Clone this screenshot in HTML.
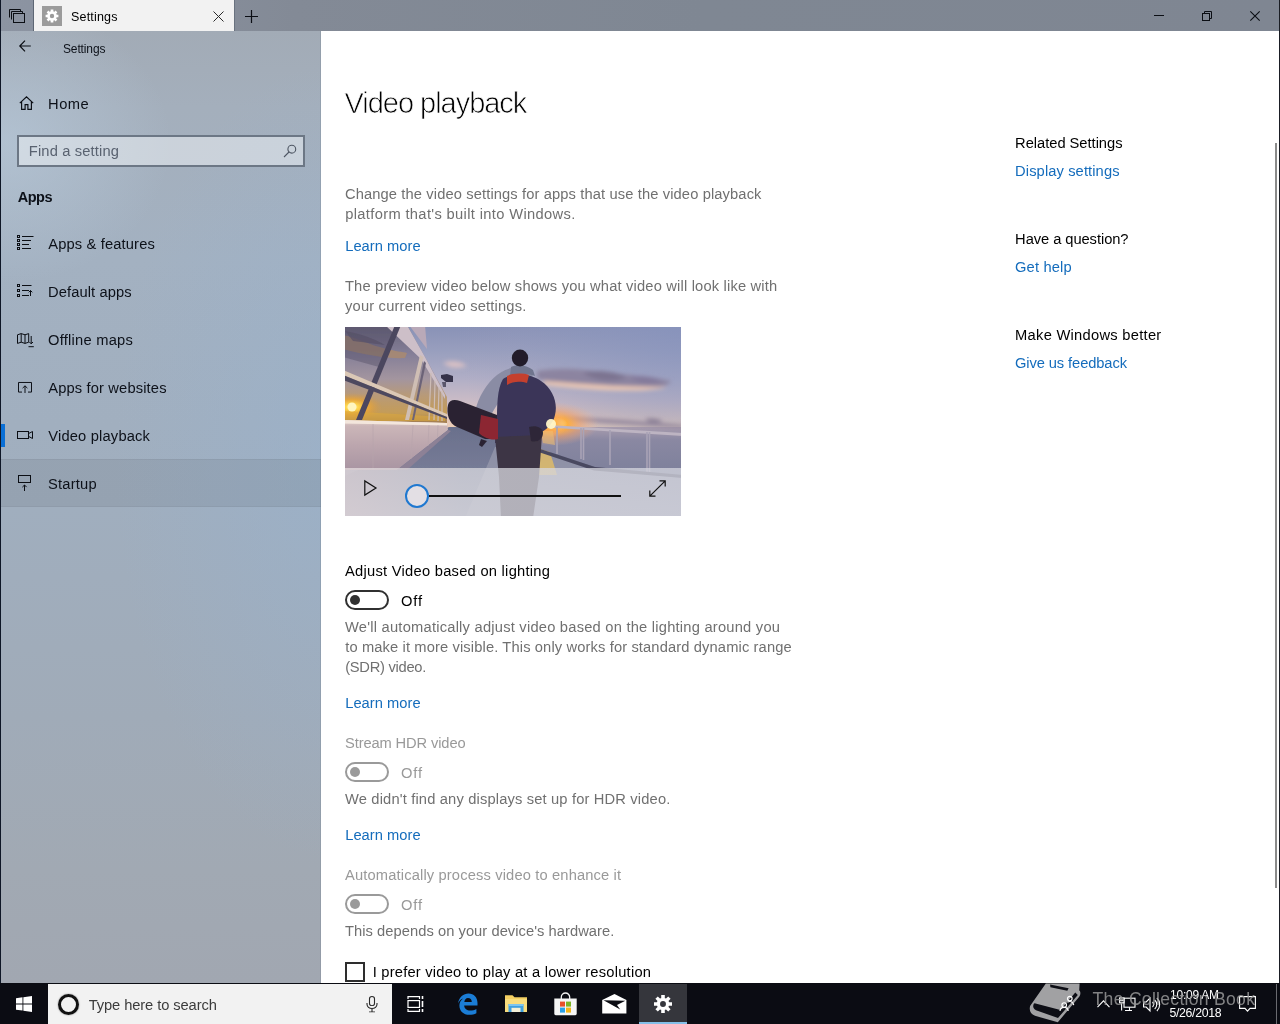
<!DOCTYPE html>
<html lang="en"><head><meta charset="utf-8"><title>Settings - Video playback</title>
<style>
html,body{margin:0;padding:0;width:1280px;height:1024px;overflow:hidden;background:#ffffff;font-family:"Liberation Sans",sans-serif;}
body{position:relative;}
.t{position:absolute;white-space:pre;line-height:1;margin:0;padding:0;}
.a{position:absolute;}
svg{position:absolute;overflow:visible;}
.tog{position:absolute;width:40px;height:16px;border:2px solid #303030;border-radius:10px;background:transparent;}
.tog i{position:absolute;left:3px;top:3px;width:10px;height:10px;border-radius:5px;background:#303030;}
.tog.d{border-color:#9a9a9a;}
.tog.d i{background:#9a9a9a;}
</style></head>
<body>

<!-- window chrome -->
<div class="a" id="titlebar" style="left:0;top:0;width:1280px;height:31px;background:linear-gradient(90deg,#8c94a2 0%,#838a96 23%,#7f8793 55%,#7f8692 100%);"></div>
<div class="a" id="sidebar" style="left:0;top:31px;width:321px;height:953px;background:
 radial-gradient(ellipse 165px 140px at 6px 112px, rgba(186,204,221,0.62), rgba(186,204,221,0) 100%),
 radial-gradient(ellipse 220px 400px at 335px 430px, rgba(152,178,206,0.55), rgba(152,178,206,0) 100%),
 linear-gradient(180deg,#a2abb6 0%,#a4afbc 8%,#a3b1c1 24%,#a0aebe 50%,#a0abb8 72%,#a1a9b3 88%,#a1a7b1 100%);"></div>
<div class="a" style="left:320px;top:31px;width:1px;height:953px;background:rgba(120,135,150,0.35);"></div>
<div class="a" style="left:1px;top:459px;width:320px;height:48px;background:rgba(0,0,0,0.065);border-top:1px solid rgba(0,0,0,0.04);border-bottom:1px solid rgba(0,0,0,0.04);box-sizing:border-box;"></div>
<div class="a" style="left:1px;top:424px;width:4px;height:23px;background:#0a6fd6;"></div>
<div class="a" id="content" style="left:321px;top:31px;width:958px;height:953px;background:#ffffff;"></div>
<div class="a" style="left:0;top:0;width:1px;height:984px;background:#0e1626;"></div>
<div class="a" style="left:1279px;top:0;width:1px;height:984px;background:#1a1d24;"></div>
<div class="a" style="left:1275px;top:143px;width:2px;height:745px;background:#8b8b8b;"></div>

<!-- tab strip -->
<div class="a" style="left:33px;top:0;width:1px;height:31px;background:#5d6674;"></div>
<div class="a" id="tab" style="left:34px;top:0;width:200px;height:31px;background:#f2f2f2;"></div>
<div class="a" style="left:234px;top:0;width:1px;height:31px;background:#69727f;"></div>
<div class="a" style="left:42px;top:6px;width:20px;height:20px;background:#9b9b9b;"></div>
<svg style="left:42px;top:6px" width="20" height="20" viewBox="0 0 20 20"><g fill="none" stroke="#fff"><circle cx="10" cy="10" r="3.5" stroke-width="2.600"/><g stroke-width="2.700"><path d="M10 3.600v2.400M10 14v2.400M3.600 10h2.400M14 10h2.400"/></g><g stroke-width="2.500"><path d="M5.500 5.500l1.700 1.700M12.800 12.800l1.700 1.700M14.500 5.500L12.800 7.200M7.200 12.800l-1.700 1.700"/></g></g></svg>
<!-- tab-set icon -->
<svg style="left:9px;top:9px" width="17" height="15" viewBox="0 0 17 15"><g fill="none" stroke="#0b0e14" stroke-width="1"><path d="M0.5 8.5V0.5h11v2"/><path d="M2.5 10.5V2.5h11v2"/><rect x="4.5" y="4.5" width="11" height="9" fill="#8a92a0"/></g></svg>
<!-- tab close -->
<svg style="left:213px;top:11px" width="11" height="11" viewBox="0 0 11 11"><path d="M0.5 0.5l10 10M10.5 0.5l-10 10" stroke="#2a2a2a" stroke-width="1" fill="none"/></svg>
<!-- new tab plus -->
<svg style="left:245px;top:10px" width="13" height="13" viewBox="0 0 13 13"><path d="M6.5 0v13M0 6.5h13" stroke="#0b0e14" stroke-width="1.2" fill="none"/></svg>
<!-- caption buttons -->
<svg style="left:1154px;top:15px" width="10" height="1" viewBox="0 0 10 1"><rect width="10" height="1" fill="#0b0e14"/></svg>
<svg style="left:1202px;top:11px" width="10" height="10" viewBox="0 0 10 10"><g fill="none" stroke="#0b0e14" stroke-width="1"><path d="M2.5 2.5V0.5h7v7h-2"/><rect x="0.5" y="2.5" width="7" height="7"/></g></svg>
<svg style="left:1250px;top:11px" width="10" height="10" viewBox="0 0 10 10"><path d="M0.3 0.3l9.4 9.4M9.7 0.3L0.3 9.7" stroke="#0b0e14" stroke-width="1.1" fill="none"/></svg>

<!-- back arrow -->
<svg style="left:19px;top:39.5px" width="13" height="12" viewBox="0 0 13 12"><path d="M11.800 6H1M6 0.700L0.800 6L6 11.300" stroke="#0b0e14" stroke-width="1.2" fill="none"/></svg>

<!-- home icon -->
<svg style="left:19px;top:96px" width="15" height="14" viewBox="0 0 15 14"><path d="M0.8 7.2L7.5 0.9L14.2 7.2M2.6 5.8V13.3H6.1V8.6H8.9V13.3H12.4V5.8" stroke="#0b0e14" stroke-width="1.15" fill="none"/></svg>

<!-- search box -->
<div class="a" style="left:17px;top:135px;width:288px;height:32px;box-sizing:border-box;border:2px solid #6c7785;background:rgba(235,238,242,0.55);"></div>
<svg style="left:283px;top:144px" width="14" height="14" viewBox="0 0 14 14"><g fill="none" stroke="#4e5663" stroke-width="1.1"><circle cx="8.8" cy="5.2" r="3.9"/><path d="M6 8L1 13"/></g></svg>

<!-- nav icons -->
<svg style="left:17px;top:235px" width="17" height="15" viewBox="0 0 17 15"><g fill="none" stroke="#0b0e14" stroke-width="1"><rect x="0.5" y="0.5" width="2" height="2"/><rect x="0.5" y="4.5" width="2" height="2"/><rect x="0.5" y="8.5" width="2" height="2"/><rect x="0.5" y="12.5" width="2" height="2"/><path d="M5 1.5h11.5M5 5.5h9M5 9.5h7M5 13.5h9"/></g></svg>
<svg style="left:17px;top:284px" width="17" height="14" viewBox="0 0 17 14"><g fill="none" stroke="#0b0e14" stroke-width="1"><rect x="0.5" y="0.5" width="2" height="2"/><rect x="0.5" y="5.5" width="2" height="2"/><rect x="0.5" y="10.5" width="2" height="2"/><path d="M5 1.5h9.5M5 6.5h7M5 11.5h7M13.5 12V6.5M11.7 8.3l1.8-1.8l1.8 1.8"/></g></svg>
<svg style="left:17px;top:333px" width="17" height="15" viewBox="0 0 17 15"><g fill="none" stroke="#0b0e14" stroke-width="1"><path d="M0.5 1.8L4.2 0.6L8 1.8L11.7 0.6V9.2L8 10.4L4.2 9.2L0.5 10.4Z"/><path d="M4.2 0.6V9.2M8 1.8V10.4"/><path d="M14.2 3V10.8M12.4 9l1.8 1.800l1.800-1.800M11.500 13.700h5.300"/></g></svg>
<svg style="left:17.5px;top:381.5px" width="14" height="11.5" viewBox="0 0 14 12" preserveAspectRatio="none"><g fill="none" stroke="#0b0e14" stroke-width="1"><path d="M4 10.5H0.5V0.5H13.5V10.5H10"/><path d="M7 11.5V4M4.6 6.4L7 4l2.4 2.4"/></g></svg>
<svg style="left:17px;top:430px" width="17" height="10" viewBox="0 0 17 10"><g fill="none" stroke="#0b0e14" stroke-width="1"><rect x="0.5" y="1.5" width="11" height="7"/><path d="M11.5 3.6L15.5 1.5V8.5L11.5 6.4"/></g></svg>
<svg style="left:18px;top:475px" width="14" height="17" viewBox="0 0 14 17"><g fill="none" stroke="#0b0e14" stroke-width="1"><rect x="0.5" y="0.5" width="12" height="7"/><path d="M6.5 16V10M4.4 12.1l2.1-2.1l2.1 2.1"/></g></svg>

<!-- video preview -->
<div class="a" id="video" style="left:345px;top:327px;width:336px;height:189px;overflow:hidden;background:#8288a2;">
<svg style="left:0;top:0" width="336" height="189" viewBox="0 0 336 189">
 <defs>
  <linearGradient id="sky" x1="0" y1="0" x2="0" y2="1"><stop offset="0" stop-color="#8891b6"/><stop offset="0.25" stop-color="#999fbe"/><stop offset="0.5" stop-color="#b0aec6"/><stop offset="0.72" stop-color="#cbbcc6"/><stop offset="0.88" stop-color="#e4c9be"/><stop offset="1" stop-color="#efd0b2"/></linearGradient>
  <radialGradient id="skyr" gradientUnits="userSpaceOnUse" cx="340" cy="-10" r="230"><stop offset="0" stop-color="#8793bd" stop-opacity="0.75"/><stop offset="0.5" stop-color="#8d97bd" stop-opacity="0.4"/><stop offset="1" stop-color="#9a9cbc" stop-opacity="0"/></radialGradient>
  <radialGradient id="sun" cx="0.5" cy="0.5" r="0.5"><stop offset="0" stop-color="#fffbe0"/><stop offset="0.14" stop-color="#ffe070"/><stop offset="0.32" stop-color="#ffae3c" stop-opacity="0.95"/><stop offset="0.6" stop-color="#f8a060" stop-opacity="0.5"/><stop offset="1" stop-color="#f0b090" stop-opacity="0"/></radialGradient>
  <radialGradient id="sun2" cx="0.5" cy="0.5" r="0.5"><stop offset="0" stop-color="#fff8c8"/><stop offset="0.2" stop-color="#ffd850"/><stop offset="0.55" stop-color="#f0a830" stop-opacity="0.75"/><stop offset="1" stop-color="#d89840" stop-opacity="0"/></radialGradient>
  <linearGradient id="deck" x1="0" y1="0" x2="0" y2="1"><stop offset="0" stop-color="#6a708c"/><stop offset="0.45" stop-color="#767b96"/><stop offset="1" stop-color="#9698ad"/></linearGradient>
  <linearGradient id="glass" x1="0" y1="0" x2="0" y2="1"><stop offset="0" stop-color="#67637a"/><stop offset="0.3" stop-color="#857f98"/><stop offset="0.55" stop-color="#a3959f"/><stop offset="0.72" stop-color="#b89a78"/><stop offset="0.9" stop-color="#c49c58"/><stop offset="1" stop-color="#a07c50"/></linearGradient>
  <linearGradient id="wall" x1="0" y1="0" x2="0" y2="1"><stop offset="0" stop-color="#e6d4cc"/><stop offset="0.12" stop-color="#cbb6b8"/><stop offset="0.5" stop-color="#bca6ae"/><stop offset="1" stop-color="#a995a2"/></linearGradient>
  <linearGradient id="sea" x1="0" y1="0" x2="0" y2="1"><stop offset="0" stop-color="#a89cae"/><stop offset="0.25" stop-color="#8a88a2"/><stop offset="1" stop-color="#7b7f9a"/></linearGradient>
  <filter id="b1" x="-5%" y="-5%" width="110%" height="110%"><feGaussianBlur stdDeviation="0.7"/></filter>
  <filter id="b3" x="-20%" y="-50%" width="140%" height="200%"><feGaussianBlur stdDeviation="2.2"/></filter>
 </defs>
 <g filter="url(#b1)">
 <rect x="-2" y="-2" width="340" height="106" fill="url(#sky)"/>
 <rect x="100" y="-2" width="238" height="106" fill="url(#skyr)"/>
 <!-- sea + far shore -->
 <rect x="178" y="100" width="160" height="52" fill="url(#sea)"/>
 <!-- clouds -->
 <g filter="url(#b3)">
  <path d="M192 44 C215 40 240 42 262 46 C285 48 305 50 326 54 C322 62 300 62 270 60 C240 58 210 56 192 52 Z" fill="#8c84a0"/>
  <path d="M198 54 C230 56 270 60 322 60 C300 66 250 64 200 58 Z" fill="#ecc8b4"/>
  <path d="M98 36 C106 33 116 34 122 39 C112 42 104 41 98 36Z" fill="#d8c0c4"/>
  <path d="M214 91 C250 90 300 95 338 98 L338 101 C300 99 250 95 214 93Z" fill="#93869c"/>
  <path d="M300 92 C306 91 314 92 318 94 C312 96 304 96 300 92Z" fill="#857a92"/><path d="M238 46 C250 42 270 44 282 50 C270 56 250 54 238 46Z" fill="#7c7390"/><path d="M284 50 C296 48 310 50 318 54 C306 58 292 56 284 50Z" fill="#82789a"/>
 </g>
 <!-- sun glow -->
 <ellipse cx="208" cy="97" rx="46" ry="22" fill="url(#sun)"/><ellipse cx="206" cy="97" rx="16" ry="13" fill="url(#sun)"/>
 <!-- deck floor -->
 <path d="M104 100 L181 100 L181 117 L250 140 L338 148 L338 191 L-2 191 L-2 150 Z" fill="url(#deck)"/>
 <path d="M150 120 L186 120 L252 143 L338 151 L338 191 L120 191 Z" fill="#a9a9ba" opacity="0.5"/>
 <path d="M192 121 L205 125 L212 148 L186 148 Z" fill="#e8c060" opacity="0.75"/><path d="M196 104 L208 104 L210 118 L198 116 Z" fill="#f0c070" opacity="0.55"/>
 <!-- right railing -->
 <path d="M203 98 L338 106 L338 109 L203 100.5 Z" fill="#bdb4c2"/>
 <g stroke="#a9a3b6" stroke-width="1.6"><path d="M212 100V127M236 101V132M238.5 101V133M265 103V138M302 105V146M304.500 105V147"/></g>
 <path d="M180 117 L250 140 L338 148 L338 151 L249 143.500 L180 120.500 Z" fill="#4a4860"/>
 <!-- left: windows -->
 <path d="M-2 -2 L62 -2 L80 30 L102 70 L102 96 L-2 94 Z" fill="url(#glass)"/>
 <path d="M-2 8 C10 10 24 18 42 22 C50 24 58 25 62 26 L60 31 C44 32 20 28 -2 22Z" fill="#a98a70" opacity="0.85"/>
 <path d="M0 4 C14 6 30 12 40 18 L8 14 Z" fill="#5c566c" opacity="0.7"/><path d="M-2 -2 L50 -2 L34 40 L-2 30 Z" fill="#4c475e" opacity="0.38"/>
 <path d="M40 -2 L62 -2 L80 30 L100 68 L100 72 L76 32 Z" fill="#cdbfc8"/>
 <path d="M64 -2 L80 -2 L82 22 Z" fill="#b9a9b8"/>
 <ellipse cx="7" cy="80" rx="30" ry="14" fill="url(#sun2)"/>
 <path d="M0 84 L100 90 L100 94 L0 94 Z" fill="#dca83c" opacity="0.6"/>
 <path d="M50 -2 L56 -2 L17 93 L11 93 Z" fill="#4c465e"/>
 <path d="M75 28 L78.500 30 L64 93 L60 93 Z" fill="#cfbeb4"/>
 <path d="M79 34 L81 36 L69 93 L67 93 Z" fill="#6c6478"/>
 <g stroke="#cdbcb6" stroke-width="1.2"><path d="M86 46L84 93M90 54L89 93M94 60L93 94M97 64L97 94"/></g>
 <path d="M-2 43 L102 87 L102 90 L-2 48 Z" fill="#dbc8b6"/>
 <path d="M-2 48 L102 90 L102 92 L-2 53 Z" fill="#4e485e"/>
 <circle cx="7" cy="80" r="4.500" fill="#fff6c0"/>
 <!-- white bulkhead -->
 <path d="M-2 93 L102 96 L103 103 L52 143 L-2 143 Z" fill="url(#wall)"/>
 <path d="M-2 93 L102 96 L102 98.500 L-2 96.500 Z" fill="#f3e6dc"/>
 <path d="M52 143 L103 103 L106 104 L62 143 Z" fill="#8d8196"/>
 <g stroke="#b7a4ac" stroke-width="0.8" opacity="0.8"><path d="M28 97V143M68 98L66 132M84 98L83 119M93 98L92.500 111"/></g>
 <!-- lamp -->
 <path d="M96 48 L102 47 L108 49 L108 55 L101 55 L96 51 Z" fill="#34334a"/><path d="M97 55 L101 55 L101 60 L98 60Z" fill="#5a566c"/>
 <!-- person: arm + shoulder (grey-blue sleeve) -->
 <path d="M130 85 C133 70 142 56 152 48 C158 43 166 40 172 41 L188 46 L186 58 L166 62 C158 68 150 80 144 92 Z" fill="#8a8ca4"/>
 <path d="M146 88 C149 78 154 70 160 64 L162 84 L152 98 Z" fill="#f0cdb4" opacity="0.0"/>
 <!-- torso / backpack -->
 <path d="M158 52 C166 46 186 46 196 54 C208 62 213 76 210 88 C208 98 200 104 194 106 L196 118 L150 116 L152 96 C152 80 152 62 158 52 Z" fill="#3a3658"/>
 <path d="M166 40 C172 37 182 38 188 43 L190 49 C182 46 172 46 165 49 Z" fill="#6f758e"/>
 <path d="M162 49 C168 46 178 46 184 48 L182 56 C176 54 168 54 162 58 Z" fill="#c4412e"/>
 <!-- legs -->
 <path d="M150 110 L197 108 L194 150 L188 191 L156 191 L154 150 Z" fill="#3d3444"/>
 <path d="M184 100 C190 98 198 100 198 106 C198 112 192 116 186 114 Z" fill="#2e2838"/>
 <!-- head -->
 <ellipse cx="175" cy="31" rx="8.200" ry="8.400" fill="#231f2c"/>
 <!-- snowboard -->
 <path d="M103 78 C104 73 109 72 115 74 L152 88 L152 112 L140 112 L112 100 C104 97 101 86 103 78 Z" fill="#2a2432"/>
 <path d="M136 88 L153 92 L153 112 C146 114 138 110 134 106 Z" fill="#8c2733"/>
 <path d="M136 112 L142 114 L137 120 L134 118Z" fill="#2a2432"/>
 <circle cx="206" cy="97" r="5" fill="#fff6c8" opacity="0.95"/>
 </g>
</svg>
<!-- controls overlay -->
<div class="a" style="left:0;top:141px;width:336px;height:48px;background:linear-gradient(90deg,rgba(228,218,220,0.78) 0%,rgba(216,216,222,0.76) 35%,rgba(212,213,222,0.76) 100%);"></div>
<svg style="left:19px;top:153px" width="13" height="16" viewBox="0 0 13 16"><path d="M0.8 0.9V15.1L12 8Z" fill="none" stroke="#111" stroke-width="1.2" stroke-linejoin="miter"/></svg>
<div class="a" style="left:84px;top:168px;width:192px;height:2px;background:#101010;"></div>
<div class="a" style="left:60px;top:157px;width:20px;height:20px;border:2px solid #1f78d0;border-radius:12px;background:#e3dfe4;"></div>
<svg style="left:304px;top:153px" width="17" height="17" viewBox="0 0 17 17"><path d="M0.8 16.2L16.2 0.8M10.5 0.8h5.7v5.7M0.8 10.5v5.7h5.7" fill="none" stroke="#111" stroke-width="1.2"/></svg>
</div>


<!-- toggles -->
<div class="tog" style="left:345px;top:590px;"><i></i></div>
<div class="tog d" style="left:345px;top:762px;"><i></i></div>
<div class="tog d" style="left:345px;top:894px;"><i></i></div>
<!-- checkbox -->
<div class="a" style="left:345px;top:962px;width:20px;height:20px;box-sizing:border-box;border:2px solid #2e2e2e;background:#fff;"></div>

<!-- taskbar -->
<div class="a" id="taskbar" style="left:0;top:983px;width:1280px;height:41px;background:#0b0c13;z-index:20;"></div>
<div class="a" style="left:48px;top:984px;width:344px;height:40px;background:#f2f2f2;z-index:21;"></div>
<svg style="left:16px;top:996px;z-index:22" width="16" height="16" viewBox="0 0 17 17"><path d="M0 2.4L6.9 1.4V8H0ZM7.8 1.3L17 0V8H7.8ZM0 8.9H6.9V15.5L0 14.5ZM7.8 8.9H17V17L7.8 15.7Z" fill="#ffffff"/></svg>
<div class="a" style="left:57.5px;top:993.5px;width:15px;height:15px;border:3px solid #111;border-radius:12px;z-index:22;box-shadow:0 0 1.5px rgba(0,0,0,0.6);"></div>
<svg style="left:365.5px;top:996px;z-index:22" width="12" height="16.5" viewBox="0 0 12 19" preserveAspectRatio="none"><g fill="none" stroke="#2a2a2a" stroke-width="1.1"><rect x="3.5" y="0.6" width="5" height="10.5" rx="2.5"/><path d="M1 8v1.5a5 5 0 0 0 10 0V8M6 14.5V18M3 18.3h6"/></g></svg>
<!-- task view -->
<svg style="left:407px;top:996px;z-index:22" width="18" height="16" viewBox="0 0 18 16"><g fill="none" stroke="#fff" stroke-width="1.2"><path d="M1 3V0.6h11.5V3M1 13v2.4h11.5V13"/><rect x="1" y="4.6" width="11.5" height="6.8"/><path d="M15.5 0v3M15.5 5v6M15.5 13v3" stroke-width="1.6"/></g></svg>
<!-- edge -->
<svg style="left:456.5px;top:993px;z-index:22" width="21" height="22" viewBox="0 0 21 22"><path d="M1 10.5C2 4 6.5 0.5 11.5 0.5C17 0.5 20.5 4.5 20.5 10V12.5H7.2C7.4 15.8 10 17.6 13.2 17.6C15.6 17.6 17.6 17 19.4 16V20.2C17.4 21.2 15 21.7 12.4 21.7C6.4 21.7 2.4 18 2.4 12.4C2.4 9.6 3.8 7 6 5.4C3.6 6.2 1.8 8.2 1 10.5ZM7.3 9H14.8C14.7 6.6 13.3 5 11 5C8.9 5 7.6 6.7 7.3 9Z" fill="#1b7dd6"/></svg>
<!-- explorer -->
<svg style="left:504px;top:993px;z-index:22" width="24" height="21" viewBox="0 0 24 21"><path d="M1 2.2h7.5l2 2H23V19H1Z" fill="#f4cf63"/><path d="M1 6h22v13H1Z" fill="#f9dc7c"/><path d="M4.5 11h15v8h-15Z" fill="#3f9fdf"/><path d="M7.5 14.8h9V19h-9Z" fill="#f4f0d8"/><path d="M4.5 11h15v2h-15Z" fill="#7cc4f0"/></svg>
<!-- store -->
<svg style="left:553.5px;top:991.5px;z-index:22" width="23" height="24" viewBox="0 0 23 24"><path d="M7.300 7V5.200a4.200 4.200 0 0 1 8.400 0V7" fill="none" stroke="#f4f4f4" stroke-width="1.300"/><path d="M0.300 6.600h22.400V21.800a1.400 1.400 0 0 1-1.400 1.400H1.700a1.400 1.400 0 0 1-1.400-1.400Z" fill="#f6f6f6"/><rect x="6" y="9.600" width="5" height="5" fill="#e8502a"/><rect x="12" y="9.600" width="5" height="5" fill="#7db526"/><rect x="6" y="15.600" width="5" height="5" fill="#2aa1e8"/><rect x="12" y="15.600" width="5" height="5" fill="#f5b619"/></svg>
<!-- mail -->
<svg style="left:601.700px;top:993.700px;z-index:22" width="25" height="20" viewBox="0 0 25 20"><path d="M0.200 6L12.500 0L24.400 6V19.600H0.200Z" fill="#ffffff"/><path d="M1.500 6.200L23.400 6.800L15 11L18.200 15.600Z" fill="#0b0c13"/></svg>
<!-- settings (active) -->
<div class="a" style="left:639px;top:984px;width:48px;height:40px;background:#35363c;z-index:21;"></div>
<div class="a" style="left:639px;top:1022px;width:48px;height:2px;background:#84bfe8;z-index:22;"></div>
<svg style="left:653px;top:994px;z-index:22" width="20" height="20" viewBox="0 0 20 20"><g fill="none" stroke="#fff"><circle cx="10" cy="10" r="4.6" stroke-width="3.3"/><g stroke-width="3.6"><path d="M10 1v3.4M10 15.6v3.4M1 10h3.4M15.6 10h3.4"/></g><g stroke-width="3.4"><path d="M3.6 3.6l2.4 2.4M14 14l2.4 2.4M16.4 3.6l-2.4 2.4M6 14l-2.4 2.4"/></g></g></svg>

<!-- tray -->
<svg style="left:1059px;top:995px;z-index:24" width="18" height="17" viewBox="0 0 18 17"><g fill="none" stroke="#fff" stroke-width="1.15"><circle cx="5.2" cy="10" r="2.3"/><path d="M1 16c0.3-2.6 2-3.7 4.2-3.7s3.600 1.100 4 3.700"/><circle cx="10.8" cy="3.6" r="2.3"/><path d="M8.4 7.300c2.400-1.700 5.700-0.600 6.400 2.800"/></g></svg>
<svg style="left:1096.5px;top:1000px;z-index:24" width="13" height="8" viewBox="0 0 13 8"><path d="M0.5 7.2L6.5 0.8L12.5 7.2" fill="none" stroke="#fff" stroke-width="1.1"/></svg>
<svg style="left:1119px;top:997px;z-index:24" width="17" height="15" viewBox="0 0 17 15"><g fill="none" stroke="#fff" stroke-width="1.1"><rect x="5" y="1.2" width="11" height="9"/><path d="M10.5 10.2V13.400M6 13.500h7"/><rect x="0.600" y="0.900" width="4.400" height="4.900" fill="#0b0c13"/><path d="M1.700 2.300v1.400h2.200v-1.400M2.600 5.800V13.600"/></g></svg>
<svg style="left:1143px;top:997px;z-index:24" width="17" height="15" viewBox="0 0 17 15"><g fill="none" stroke="#fff" stroke-width="1.1"><path d="M0.6 5h2.6L7 1.2V13.8L3.2 10H0.6Z"/><path d="M9.5 5a3.5 3.5 0 0 1 0 5M11.7 3a6 6 0 0 1 0 9M13.9 1a9 9 0 0 1 0 13"/></g></svg>
<svg style="left:1239px;top:996px;z-index:24" width="17" height="17" viewBox="0 0 17 17"><path d="M0.6 0.6h15.8V12.4H11L8.5 15.2L6 12.4H0.6Z" fill="none" stroke="#fff" stroke-width="1.1"/></svg>
<div class="a" style="left:1276px;top:984px;width:1px;height:40px;background:#6a6b70;z-index:24;"></div>

<!-- watermark book -->
<svg style="left:1029px;top:983px;z-index:23" width="54" height="41" viewBox="0 0 54 41"><path d="M16.8 0.6 L50.6 0.6 L50.2 7.5 C52 8 51.6 12.5 50 14 L28.8 39.3 L6 32.8 Q-0.6 30 1.1 23 Z" fill="#a1a1a3"/><path d="M5.6 20.2 L31.4 27.1 L46.3 9.6 L48.8 12 L29 35 L7 27.2 Q3.6 25.4 4.3 22.2 Q4.7 20.2 5.600 20.2Z" fill="#0d0e15"/><path d="M21.1 1.4 L39.6 5.2 L38.3 7.8 L21.4 4.300 Z" fill="#0d0e15"/></svg>
<div id="txt" style="position:absolute;left:0;top:0;width:1280px;height:1024px;will-change:transform;z-index:40;">
<span class="t" style="left:71.03px;top:11.12px;font-size:12.5px;color:#000;font-weight:400;letter-spacing:0.178px;">Settings</span>
<span class="t" style="left:62.96px;top:42.54px;font-size:12px;color:#0d1119;font-weight:400;letter-spacing:-0.126px;">Settings</span>
<span class="t" style="left:48.09px;top:96.56px;font-size:14.7px;color:#0d1119;font-weight:400;letter-spacing:0.457px;">Home</span>
<span class="t" style="left:28.79px;top:143.56px;font-size:14.7px;color:#596270;font-weight:400;letter-spacing:0.151px;">Find a setting</span>
<span class="t" style="left:17.64px;top:189.73px;font-size:14.5px;color:#0d1119;font-weight:700;letter-spacing:-0.431px;">Apps</span>
<span class="t" style="left:48.27px;top:236.56px;font-size:14.7px;color:#0d1119;font-weight:400;letter-spacing:0.146px;">Apps &amp; features</span>
<span class="t" style="left:48.09px;top:284.56px;font-size:14.7px;color:#0d1119;font-weight:400;letter-spacing:0.088px;">Default apps</span>
<span class="t" style="left:48.10px;top:332.56px;font-size:14.7px;color:#0d1119;font-weight:400;letter-spacing:0.231px;">Offline maps</span>
<span class="t" style="left:48.27px;top:380.56px;font-size:14.7px;color:#0d1119;font-weight:400;letter-spacing:0.145px;">Apps for websites</span>
<span class="t" style="left:48.24px;top:428.56px;font-size:14.7px;color:#0d1119;font-weight:400;letter-spacing:0.183px;">Video playback</span>
<span class="t" style="left:48.03px;top:476.56px;font-size:14.7px;color:#0d1119;font-weight:400;letter-spacing:0.204px;">Startup</span>
<span class="t" style="left:344.47px;top:88.85px;font-size:29px;color:#000000;font-weight:400;letter-spacing:-1.022px;-webkit-text-stroke:0.75px #fff;">Video playback</span>
<span class="t" style="left:344.95px;top:186.56px;font-size:14.7px;color:#707070;font-weight:400;letter-spacing:0.122px;">Change the video settings for apps that use the video playback</span>
<span class="t" style="left:345.15px;top:206.56px;font-size:14.7px;color:#707070;font-weight:400;letter-spacing:0.349px;">platform that&#x27;s built into Windows.</span>
<span class="t" style="left:345.19px;top:238.56px;font-size:14.7px;color:#146cbc;font-weight:400;letter-spacing:0.039px;">Learn more</span>
<span class="t" style="left:344.97px;top:278.56px;font-size:14.7px;color:#707070;font-weight:400;letter-spacing:0.174px;">The preview video below shows you what video will look like with</span>
<span class="t" style="left:345.06px;top:298.56px;font-size:14.7px;color:#707070;font-weight:400;letter-spacing:0.183px;">your current video settings.</span>
<span class="t" style="left:345.07px;top:563.56px;font-size:14.7px;color:#000000;font-weight:400;letter-spacing:0.260px;">Adjust Video based on lighting</span>
<span class="t" style="left:400.90px;top:593.56px;font-size:14.7px;color:#000000;font-weight:400;letter-spacing:0.873px;">Off</span>
<span class="t" style="left:345.04px;top:619.56px;font-size:14.7px;color:#707070;font-weight:400;letter-spacing:0.224px;">We&#x27;ll automatically adjust video based on the lighting around you</span>
<span class="t" style="left:345.18px;top:639.56px;font-size:14.7px;color:#707070;font-weight:400;letter-spacing:0.127px;">to make it more visible. This only works for standard dynamic range</span>
<span class="t" style="left:345.19px;top:659.56px;font-size:14.7px;color:#707070;font-weight:400;letter-spacing:-0.266px;">(SDR) video.</span>
<span class="t" style="left:345.19px;top:695.56px;font-size:14.7px;color:#146cbc;font-weight:400;letter-spacing:0.039px;">Learn more</span>
<span class="t" style="left:345.03px;top:735.56px;font-size:14.7px;color:#999999;font-weight:400;letter-spacing:-0.124px;">Stream HDR video</span>
<span class="t" style="left:400.90px;top:765.56px;font-size:14.7px;color:#999999;font-weight:400;letter-spacing:0.873px;">Off</span>
<span class="t" style="left:345.04px;top:791.56px;font-size:14.7px;color:#707070;font-weight:400;letter-spacing:0.159px;">We didn&#x27;t find any displays set up for HDR video.</span>
<span class="t" style="left:345.19px;top:827.56px;font-size:14.7px;color:#146cbc;font-weight:400;letter-spacing:0.039px;">Learn more</span>
<span class="t" style="left:345.07px;top:867.56px;font-size:14.7px;color:#999999;font-weight:400;letter-spacing:0.145px;">Automatically process video to enhance it</span>
<span class="t" style="left:400.90px;top:897.56px;font-size:14.7px;color:#999999;font-weight:400;letter-spacing:0.873px;">Off</span>
<span class="t" style="left:344.97px;top:923.56px;font-size:14.7px;color:#707070;font-weight:400;letter-spacing:0.053px;">This depends on your device&#x27;s hardware.</span>
<span class="t" style="left:372.64px;top:964.56px;font-size:14.7px;color:#000000;font-weight:400;letter-spacing:0.226px;">I prefer video to play at a lower resolution</span>
<span class="t" style="left:1015.09px;top:135.56px;font-size:14.7px;color:#000000;font-weight:400;letter-spacing:-0.023px;">Related Settings</span>
<span class="t" style="left:1015.09px;top:163.56px;font-size:14.7px;color:#146cbc;font-weight:400;letter-spacing:0.105px;">Display settings</span>
<span class="t" style="left:1015.09px;top:231.56px;font-size:14.7px;color:#000000;font-weight:400;letter-spacing:-0.058px;">Have a question?</span>
<span class="t" style="left:1015.06px;top:259.56px;font-size:14.7px;color:#146cbc;font-weight:400;letter-spacing:0.146px;">Get help</span>
<span class="t" style="left:1015.09px;top:327.56px;font-size:14.7px;color:#000000;font-weight:400;letter-spacing:0.274px;">Make Windows better</span>
<span class="t" style="left:1015.06px;top:355.56px;font-size:14.7px;color:#146cbc;font-weight:400;letter-spacing:-0.104px;">Give us feedback</span>
<span class="t" style="left:88.67px;top:997.56px;font-size:14.7px;color:#3c3c3c;font-weight:400;letter-spacing:-0.086px;z-index:30;">Type here to search</span>
<span class="t" style="left:1170.09px;top:989.44px;font-size:12px;color:#ffffff;font-weight:400;letter-spacing:-0.258px;z-index:30;">10:09 AM</span>
<span class="t" style="left:1169.51px;top:1006.89px;font-size:12.3px;color:#ffffff;font-weight:400;letter-spacing:-0.336px;z-index:30;">5/26/2018</span>
<span class="t" style="left:1092.60px;top:991.10px;font-size:17.6px;color:rgba(150,150,152,0.85);font-weight:400;letter-spacing:0.273px;z-index:31;">The Collection Book</span>
</div>
</body></html>
